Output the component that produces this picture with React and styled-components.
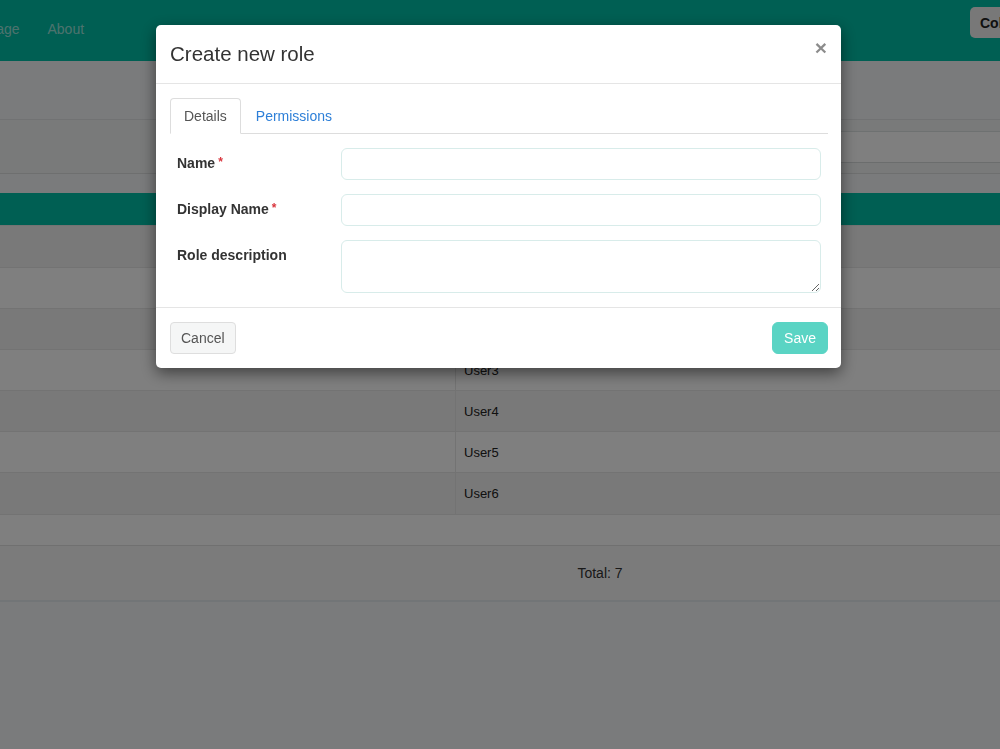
import React from "react";
import styled, { createGlobalStyle } from "styled-components";

const GlobalStyle = createGlobalStyle`
  html, body {
    margin: 0;
    padding: 0;
    background: #f4f6f8;
    font-family: "Liberation Sans", Arial, Helvetica, sans-serif;
    color: #333;
    overflow: hidden;
  }
  * {
    box-sizing: border-box;
  }
`;

const Page = styled.div`
  width: 1000px;
  height: 749px;
  background: #f4f6f8;
`;

const Navbar = styled.nav`
  height: 61px;
  background: #00bea6;
  display: flex;
  align-items: center;
  justify-content: space-between;
`;

const NavLinks = styled.div`
  display: flex;
  gap: 28px;
  margin-left: -49px;
  margin-top: -4px;
`;

const NavLink = styled.a`
  font-size: 14px;
  color: rgba(255, 255, 255, 0.62);
  text-decoration: none;
`;

const NavButton = styled.button`
  height: 31px;
  width: 30px;
  margin-top: -16px;
  padding: 0 0 0 10px;
  background: #f0f0f0;
  border: none;
  border-radius: 5px 0 0 5px;
  font-family: inherit;
  font-weight: bold;
  font-size: 14px;
  color: #222;
  text-align: left;
  overflow: hidden;
  white-space: nowrap;
`;

const Toolbar = styled.div`
  height: 59px;
  border-bottom: 1px solid #e2e4e6;
`;

const SearchBar = styled.div`
  height: 54px;
  display: flex;
  align-items: center;
  justify-content: flex-end;
  border-bottom: 1px solid #dcdedf;
  background: #f2f4f4;
`;

const SearchBox = styled.div`
  width: 300px;
  height: 32px;
  border-top: 1px solid #dde3e3;
  border-bottom: 1px solid #d6dadb;
  background: #ffffff;
`;

const Spacer = styled.div`
  height: 19px;
`;

const Table = styled.div`
  display: grid;
  grid-template-columns: 455px 1fr;
`;

const HeadCell = styled.div`
  height: 32px;
  background: #00bea6;
`;

const Cell = styled.div`
  height: ${(p) => p.$h}px;
  display: flex;
  align-items: center;
  padding-left: 8px;
  font-size: 13px;
  color: #222;
  background: ${(p) => (p.$odd ? "#ffffff" : "#f2f2f2")};
  border-top: 1px solid #e6e6e6;
  border-left: ${(p) => (p.$right ? "1px solid #e6e6e6" : "none")};
`;

const EmptyRow = styled.div`
  height: 32px;
  background: #ffffff;
  border-top: 1px solid #e6e6e6;
  border-bottom: 1px solid #e0e0e0;
`;

const Footer = styled.div`
  height: 56px;
  display: flex;
  align-items: center;
  justify-content: center;
  padding-left: 200px;
  font-size: 14px;
  color: #333;
  background: #f7f7f7;
  border-bottom: 2px solid #e4eaee;
`;

const Overlay = styled.div`
  position: fixed;
  top: 0;
  left: 0;
  right: 0;
  bottom: 0;
  background: rgba(0, 0, 0, 0.5);
  padding-top: 25px;
  padding-left: 156px;
`;

const Modal = styled.div`
  width: 685px;
  background: #ffffff;
  border-radius: 5px;
  box-shadow: 0 5px 15px rgba(0, 0, 0, 0.5);
`;

const ModalHeader = styled.div`
  height: 59px;
  display: flex;
  align-items: center;
  justify-content: space-between;
  padding: 0 14px;
  border-bottom: 1px solid #e5e5e5;
`;

const Title = styled.h4`
  margin: 0;
  font-size: 20.5px;
  font-weight: normal;
  color: #333;
`;

const Close = styled.button`
  border: none;
  background: none;
  padding: 0;
  margin-top: -13px;
  font-family: inherit;
  font-size: 21px;
  font-weight: bold;
  color: #000;
  opacity: 0.45;
  line-height: 1;
`;

const ModalBody = styled.div`
  padding: 14px 13px 14px 14px;
`;

const Tabs = styled.div`
  display: flex;
  gap: 1px;
  border-bottom: 1px solid #ddd;
`;

const Tab = styled.div`
  height: 36px;
  margin-bottom: -1px;
  padding: 0 13px;
  display: flex;
  align-items: center;
  font-size: 14px;
  color: ${(p) => (p.$active ? "#555" : "#2d7fd8")};
  background: ${(p) => (p.$active ? "#ffffff" : "transparent")};
  border: 1px solid ${(p) => (p.$active ? "#ddd" : "transparent")};
  border-bottom-color: ${(p) => (p.$active ? "#ffffff" : "transparent")};
  border-radius: 4px 4px 0 0;
`;

const Form = styled.div`
  display: grid;
  grid-template-columns: 171px 1fr;
  row-gap: 14px;
  padding: 14px 7px 0 0;
`;

const Label = styled.label`
  padding: 7px 0 0 7px;
  font-size: 14px;
  font-weight: bold;
  color: #333;
`;

const Req = styled.span`
  color: #d9363e;
  font-size: 12px;
  margin-left: 3px;
  vertical-align: top;
`;

const Input = styled.input`
  height: 32px;
  width: 100%;
  border: 1px solid #d8ecea;
  border-radius: 6px;
  font-family: inherit;
  font-size: 14px;
  outline: none;
`;

const TextArea = styled.textarea`
  display: block;
  height: 53px;
  width: 100%;
  border: 1px solid #d8ecea;
  border-radius: 6px;
  font-family: inherit;
  font-size: 14px;
  outline: none;
`;

const ModalFooter = styled.div`
  height: 61px;
  display: flex;
  align-items: center;
  justify-content: space-between;
  padding: 0 13px 1px 14px;
  border-top: 1px solid #e5e5e5;
`;

const Button = styled.button`
  height: 32px;
  padding: 0 ${(p) => (p.$primary ? "11px" : "10px")};
  font-family: inherit;
  font-size: 14px;
  border-radius: ${(p) => (p.$primary ? "6px" : "4px")};
  border: 1px solid ${(p) => (p.$primary ? "#5ad4c4" : "#dedede")};
  background: ${(p) => (p.$primary ? "#5ad4c4" : "#f5f6f6")};
  color: ${(p) => (p.$primary ? "#ffffff" : "#555")};
`;

const rowHeights = [42, 41, 41, 41, 41, 41, 42];

export default function App() {
  return (
    <Page>
      <GlobalStyle />
      <Navbar>
        <NavLinks>
          <NavLink>Homepage</NavLink>
          <NavLink>About</NavLink>
        </NavLinks>
        <NavButton>Columns</NavButton>
      </Navbar>
      <Toolbar />
      <SearchBar>
        <SearchBox />
      </SearchBar>
      <Spacer />
      <Table>
        <HeadCell />
        <HeadCell />
        {rowHeights.map((h, i) => (
          <React.Fragment key={i}>
            <Cell $h={h} $odd={i % 2 === 1} />
            <Cell $h={h} $odd={i % 2 === 1} $right>
              User{i}
            </Cell>
          </React.Fragment>
        ))}
      </Table>
      <EmptyRow />
      <Footer>Total: 7</Footer>

      <Overlay>
        <Modal>
          <ModalHeader>
            <Title>Create new role</Title>
            <Close>×</Close>
          </ModalHeader>
          <ModalBody>
            <Tabs>
              <Tab $active>Details</Tab>
              <Tab>Permissions</Tab>
            </Tabs>
            <Form>
              <Label>
                Name<Req>*</Req>
              </Label>
              <Input />
              <Label>
                Display Name<Req>*</Req>
              </Label>
              <Input />
              <Label>Role description</Label>
              <TextArea />
            </Form>
          </ModalBody>
          <ModalFooter>
            <Button>Cancel</Button>
            <Button $primary>Save</Button>
          </ModalFooter>
        </Modal>
      </Overlay>
    </Page>
  );
}
